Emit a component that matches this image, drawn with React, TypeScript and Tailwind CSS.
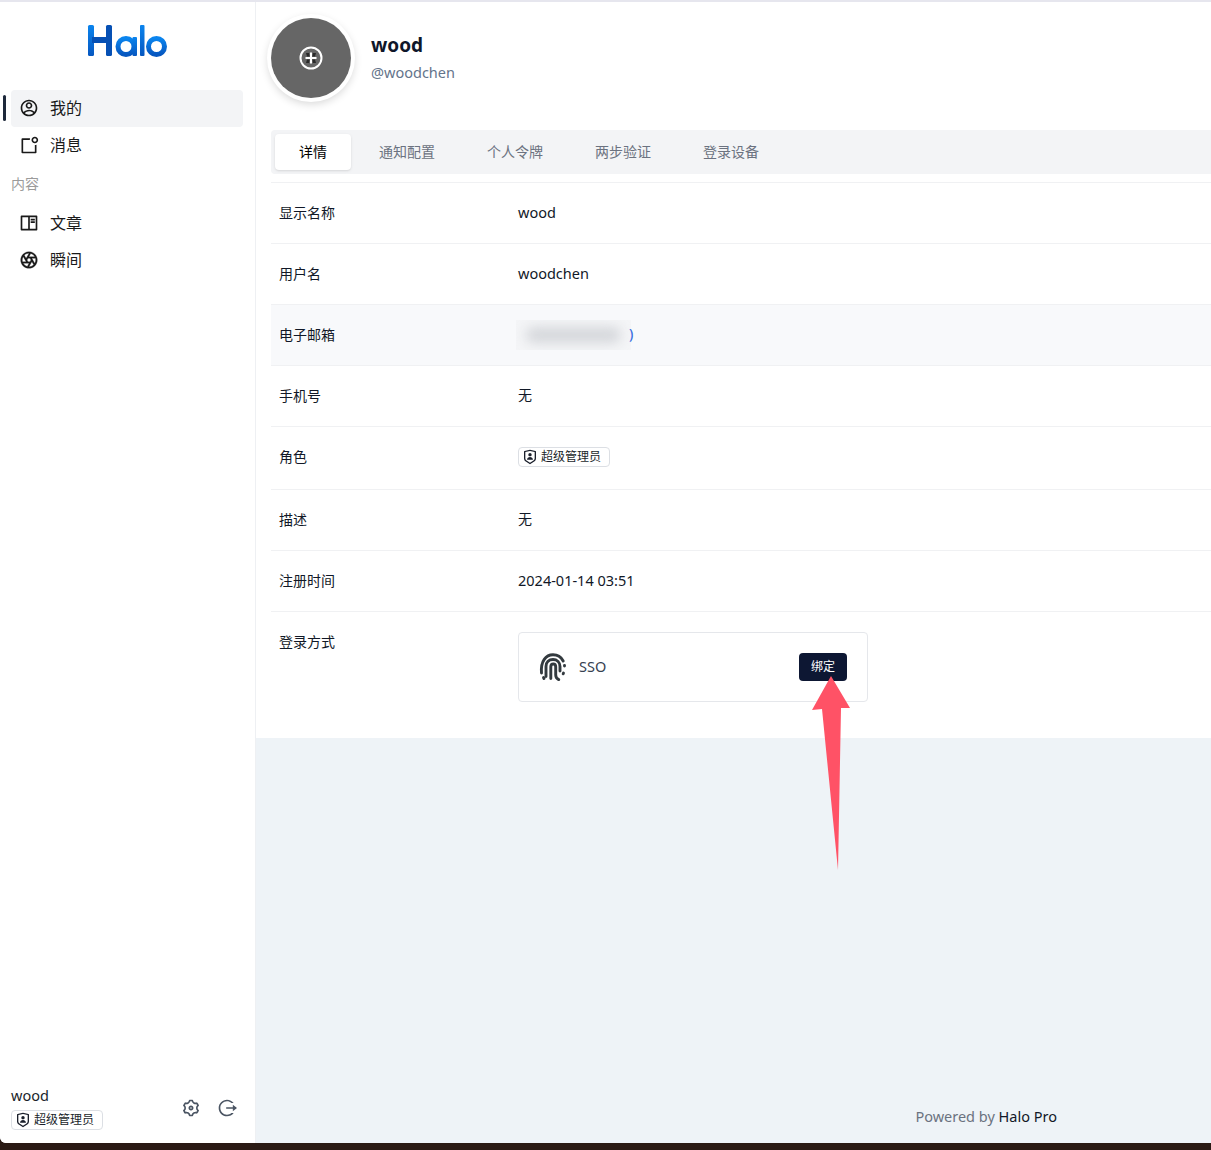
import React from "react";
import {
  RiAccountCircleLine,
  RiBookReadLine,
  RiCameraLensLine,
  RiLogoutCircleRLine,
  RiNotificationBadgeLine,
  RiSettings3Line,
  RiShieldUserLine,
} from "react-icons/ri";

const FONT = "font-['Noto_Sans','Noto_Sans_CJK_SC',sans-serif]";

const HaloLogo = () => (
  <svg width="80" height="34" viewBox="0 0 80 34">
    <defs>
      <linearGradient id="halo" x1="0" y1="0" x2="0" y2="1">
        <stop offset="0" stopColor="#0a84ee" />
        <stop offset="1" stopColor="#0657c0" />
      </linearGradient>
    </defs>
    <rect x="1" y="2" width="6" height="31" rx="1.5" fill="url(#halo)" />
    <rect x="19" y="2" width="6" height="31" rx="1.5" fill="#0650b4" />
    <rect x="5" y="14" width="16" height="6" fill="#0650b4" />
    <circle cx="39" cy="23.5" r="8" fill="none" stroke="url(#halo)" strokeWidth="5" />
    <rect x="45.5" y="14" width="4.5" height="19" rx="1" fill="url(#halo)" />
    <rect x="53" y="2" width="4.5" height="31" rx="1" fill="url(#halo)" />
    <circle cx="69.5" cy="23.5" r="8" fill="none" stroke="url(#halo)" strokeWidth="5" />
  </svg>
);

const AvatarAddIcon = () => (
  <svg width="24" height="24" viewBox="0 0 24 24" fill="none">
    <path d="M7 7h3l.6 3.6H8zM14 7h3l-1 3.6h-2.6zM8 13.4h2.6L10 17H7zM13.4 13.4H16l1 3.6h-3z" fill="#2a2a2a" />
    <circle cx="12" cy="12" r="10.5" stroke="#fff" strokeWidth="2" />
    <path d="M12 6.5v11M6.5 12h11" stroke="#fff" strokeWidth="2" />
  </svg>
);

const FingerprintIcon = () => (
  <svg width="28" height="28" viewBox="0 0 28 28" fill="none" stroke="#333a3f" strokeWidth="2.9" strokeLinecap="round">
    <path d="M2.5 20C1.5 8 7 1.8 14 1.8c4.4 0 8.2 2.4 10.2 6.2" />
    <path d="M7 23.5V13.5C7 9 10 6.5 14 6.5s7 2.8 7 7V18" />
    <path d="M11.8 25.5V13.8c0-1.6 1-2.8 2.5-2.8s2.4 1.2 2.4 2.8V22c0 2.2 1 3.6 3 4.6" />
    <path d="M4.5 24.5l.5 1" />
    <path d="M25.5 12.5v.5M24.5 20l-.3.8" />
  </svg>
);

const RoleBadge = () => (
  <div className="flex h-5 w-fit items-center gap-[3px] rounded border border-[#dcdfe4] bg-white pl-[3px] pr-2 text-xs text-[#1a1f2b]">
    <RiShieldUserLine className="h-4 w-4" />
    <span className="pb-px">超级管理员</span>
  </div>
);

const NavItem = ({ icon, label, active }: { icon: React.ReactNode; label: string; active?: boolean }) => (
  <div className={`relative flex h-[37px] items-center gap-[11px] rounded pb-[2px] pl-2 text-base text-[#1a1a1a] ${active ? "bg-[#f3f4f6]" : ""}`}>
    {active && <div className="absolute -left-2 top-[5px] h-[26px] w-[3px] rounded-sm bg-[#1e293b]" />}
    <span className="flex w-5 justify-center text-[20px]">{icon}</span>
    {label}
  </div>
);

const Row = ({ label, children, className = "" }: { label: string; children: React.ReactNode; className?: string }) => (
  <div className={`flex items-center border-b border-[#f0f1f3] pl-2 text-sm text-[#111827] ${className}`}>
    <div className="w-[239px] shrink-0">{label}</div>
    <div>{children}</div>
  </div>
);

const Latin = ({ children }: { children: React.ReactNode }) => (
  <div className="pb-[2px] text-[14.5px]">{children}</div>
);

const tabs = ["详情", "通知配置", "个人令牌", "两步验证", "登录设备"];

export default function App() {
  return (
    <div className={`h-[1150px] overflow-hidden bg-[#2a1a14] ${FONT}`}>
      <div className="relative flex h-[1143px] overflow-hidden rounded-bl-md border-t-2 border-[#e6e6ee] bg-[#eef3f7]">
        {/* sidebar */}
        <aside className="flex w-[256px] shrink-0 flex-col justify-between border-r border-[#eef0f3] bg-white">
          <div>
            <div className="flex justify-center pr-[2px] pt-[21px]">
              <HaloLogo />
            </div>
            <nav className="mt-[33px] pl-[11px] pr-3">
              <NavItem active icon={<RiAccountCircleLine />} label="我的" />
              <NavItem icon={<RiNotificationBadgeLine />} label="消息" />
              <div className="mb-[11px] mt-[10px] text-sm leading-5 text-[#9b9b9b]">内容</div>
              <NavItem icon={<RiBookReadLine />} label="文章" />
              <NavItem icon={<RiCameraLensLine stroke="currentColor" strokeWidth={0.3} />} label="瞬间" />
            </nav>
          </div>
          <div className="flex items-center justify-between pb-[13px] pl-[11px] pr-[18px]">
            <div>
              <div className="mb-[5px] text-[14.5px] leading-[20px] text-[#1a1f2b]">wood</div>
              <RoleBadge />
            </div>
            <div className="flex items-center gap-4 text-[#4b5563]">
              <RiSettings3Line className="h-5 w-5" />
              <RiLogoutCircleRLine className="h-5 w-5" />
            </div>
          </div>
        </aside>

        {/* main */}
        <main className="flex min-w-0 flex-1 flex-col justify-between">
          <section className="bg-white pl-[15px]">
            <div className="flex h-[128px] items-start pt-4">
              <div className="flex h-[80px] w-[80px] shrink-0 items-center justify-center rounded-full bg-[#666666] shadow-[0_0_0_4px_#fff,0_3px_8px_3px_rgba(0,0,0,0.16)]">
                <AvatarAddIcon />
              </div>
              <div className="ml-5 pt-[13px]">
                <div className="text-[19px] font-bold leading-[28px] text-[#0f172a]">wood</div>
                <div className="mt-[3px] text-[14.5px] leading-5 text-[#64748b]">@woodchen</div>
              </div>
            </div>

            <div className="flex h-[44px] gap-1 rounded-l bg-[#f3f4f6] p-1">
              {tabs.map((tab, i) => (
                <div
                  key={tab}
                  className={`flex items-center rounded px-6 pb-[2px] text-[14px] ${i === 0 ? "bg-white text-black shadow-sm" : "text-[#6b7280]"}`}
                >
                  {tab}
                </div>
              ))}
            </div>

            <div className="mt-2 border-t border-[#f0f1f3]">
              <Row label="显示名称" className="h-[61px]"><Latin>wood</Latin></Row>
              <Row label="用户名" className="h-[61px]"><Latin>woodchen</Latin></Row>
              <Row label="电子邮箱" className="h-[61px] bg-[#f8f9fb]">
                <div className="-ml-0.5 flex items-center">
                  <div className="flex h-[30px] w-[115px] items-center justify-center overflow-hidden bg-[#f4f5f7]">
                    <div className="h-4 w-[95px] rounded-full bg-[#d5d7db] blur-[6px]" />
                  </div>
                  <span className="-ml-[2px] pb-[2px] text-[14px] font-medium text-[#3b6fe0]">)</span>
                </div>
              </Row>
              <Row label="手机号" className="h-[61px]"><div className="pb-[2px]">无</div></Row>
              <Row label="角色" className="h-[63px] pb-[2px]"><RoleBadge /></Row>
              <Row label="描述" className="h-[61px]"><div className="pb-[2px]">无</div></Row>
              <Row label="注册时间" className="h-[61px]"><Latin>2024-01-14 03:51</Latin></Row>
              <div className="flex h-[126px] pl-2 pt-5 text-sm text-[#111827]">
                <div className="w-[239px] shrink-0 leading-5">登录方式</div>
                <div className="flex h-[70px] w-[350px] items-center justify-between rounded border border-[#e5e7eb] pl-5 pr-5">
                  <div className="flex items-center gap-3">
                    <FingerprintIcon />
                    <span className="pb-[2px] text-[14.5px] text-[#374151]">SSO</span>
                  </div>
                  <div className="flex h-7 w-12 items-center justify-center rounded bg-[#0d1733] text-xs text-white">绑定</div>
                </div>
              </div>
            </div>
          </section>

          <footer className="flex justify-end pb-[17px] pr-[154px] text-[14.5px] leading-5 text-[#6b7280]">
            <span>Powered by <span className="text-[#111827]">Halo Pro</span></span>
          </footer>
        </main>

        {/* annotation arrow */}
        <svg className="pointer-events-none absolute left-[805px] top-[672px]" width="50" height="200" viewBox="0 0 50 200">
          <polygon points="26,2 7,36 17,35 33,196 36,34 45,34" fill="#ff5266" />
        </svg>
      </div>
    </div>
  );
}
